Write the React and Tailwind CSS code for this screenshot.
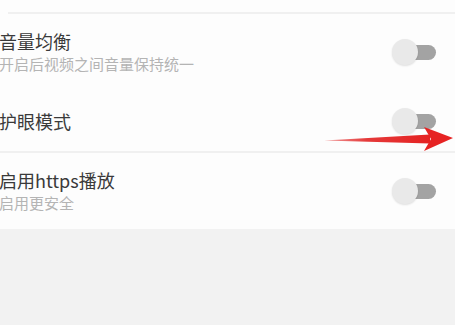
import React from "react";

function Toggle() {
  return (
    <div className="relative w-[44px] h-[26px] shrink-0">
      <div className="absolute left-[10px] top-[6px] w-[34px] h-[15px] rounded-full bg-[#a3a3a3]" />
      <div className="absolute left-0 top-0 w-[26px] h-[26px] rounded-full bg-[#e9e9e9] shadow-[0_1px_2px_rgba(0,0,0,0.12)]" />
    </div>
  );
}

function Row({ title, sub, h, border }) {
  return (
    <div className={`flex items-center justify-between pr-[19px] ${h} ${border ? "border-t-[2px] border-[#f0f0f0]" : ""}`}>
      <div className="flex flex-col -ml-[1px]">
        <span className="text-[18px] leading-[22px] text-[#3a3a3a]">{title}</span>
        {sub && <span className="text-[15px] leading-[20px] text-[#b4b4b4] mt-[2px]">{sub}</span>}
      </div>
      <Toggle />
    </div>
  );
}

export default function App() {
  return (
    <div
      className="relative w-[455px] h-[325px] bg-[#f2f2f2] overflow-hidden"
      style={{ fontFamily: '"Noto Sans CJK SC", "Noto Sans", sans-serif' }}
    >
      <div className="bg-[#fdfdfd]">
        <div className="h-[12px]" />
        <div className="ml-[8px] h-[2px] bg-[#f0f0f0]" />
        <Row title="音量均衡" sub="开启后视频之间音量保持统一" h="h-[76px]" />
        <Row title="护眼模式" h="h-[61px]" />
        <Row title="启用https播放" sub="启用更安全" h="h-[78px]" border />
      </div>
      <svg className="absolute left-0 top-0" width="455" height="325" viewBox="0 0 455 325">
        <defs>
          <linearGradient id="g" x1="0" y1="0" x2="1" y2="0">
            <stop offset="0" stopColor="#f2a0a0" />
            <stop offset="0.4" stopColor="#e53a3a" />
            <stop offset="1" stopColor="#e52222" />
          </linearGradient>
        </defs>
        <polygon points="324,140.5 430,134.5 430,143.5" fill="url(#g)" />
        <polygon points="424,127 453,138 424,151 431,139" fill="#e62323" />
      </svg>
    </div>
  );
}
